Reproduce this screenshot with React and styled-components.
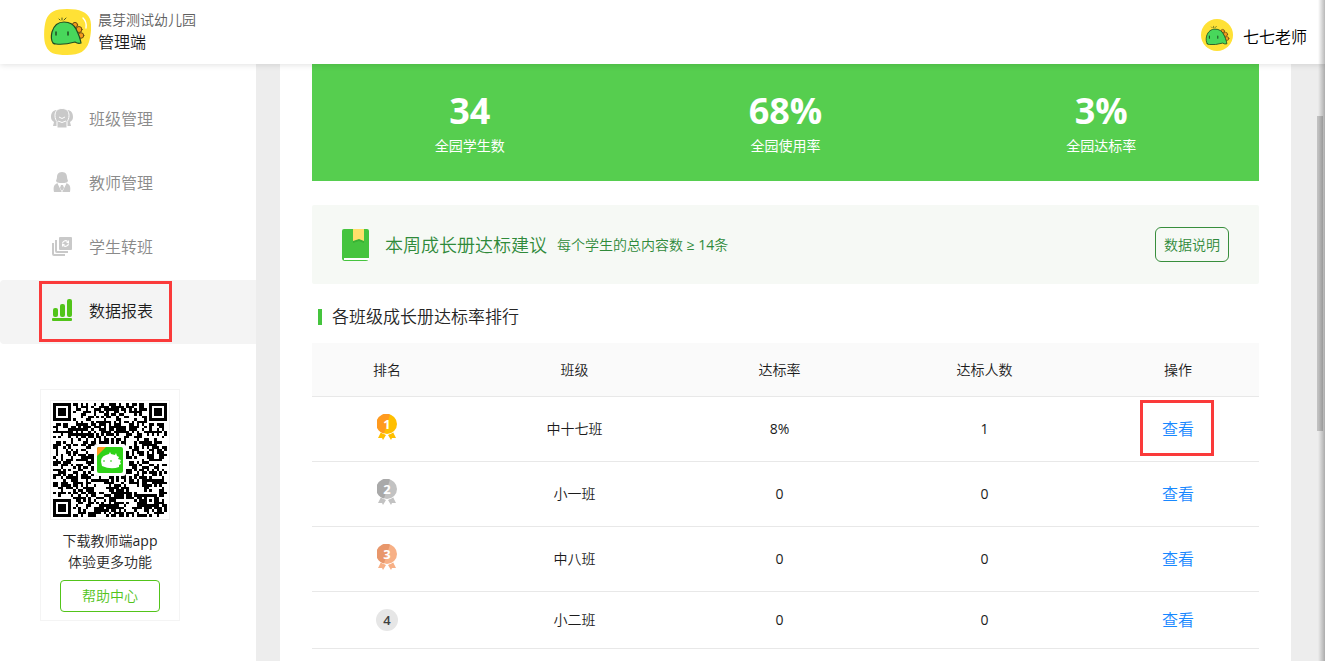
import React from 'react';
import styled, { createGlobalStyle } from 'styled-components';

const GlobalStyle = createGlobalStyle`
  * {
    box-sizing: border-box;
  }
  body {
    margin: 0;
    background: #ededed;
    color: #262626;
    font-family: "Open Sans", "Noto Sans CJK SC", sans-serif;
    font-size: 14px;
    font-weight: 350;
  }
  button {
    font-family: inherit;
    font-weight: inherit;
    cursor: pointer;
  }
`;

const Page = styled.div`
  position: relative;
  display: flex;
  flex-direction: column;
  height: 100vh;
  overflow: hidden;
`;
const Header = styled.header`
  position: relative;
  z-index: 2;
  display: flex;
  flex-shrink: 0;
  justify-content: space-between;
  align-items: center;
  height: 64px;
  padding: 0 18px 0 44px;
  background: #fff;
  box-shadow: 0 1px 6px rgba(0, 0, 0, 0.12);
`;
const Brand = styled.div`
  display: flex;
  align-items: center;
  gap: 7px;
`;
const BrandText = styled.div`
  padding-bottom: 2px;
  line-height: 22px;
  color: #606060;
`;
const BrandTitle = styled.div`
  font-size: 16px;
  color: #1c1c1c;
`;
const User = styled.div`
  display: flex;
  align-items: center;
  gap: 10px;
  padding-top: 6px;
  font-size: 16px;
  line-height: 24px;
  color: #000;
`;
const UserName = styled.span`
  padding-top: 4px;
`;
const Body = styled.div`
  display: flex;
  flex: 1;
  min-height: 0;
`;
const Sidebar = styled.aside`
  flex: 0 0 256px;
  padding-top: 24px;
  background: #fff;
`;
const MenuItem = styled.a`
  position: relative;
  display: flex;
  align-items: center;
  gap: 15px;
  height: 64px;
  padding: 0 0 4px 50px;
  border-radius: 4px 0 0 4px;
  font-size: 16px;
  text-decoration: none;
  color: ${(p) => (p.$active ? '#1c1c1c' : '#8a8a8a')};
  background: ${(p) => (p.$active ? '#f4f4f4' : 'transparent')};
`;
const Mark = styled.span`
  position: absolute;
  inset: ${(p) => p.$inset};
  border: 3px solid #fa3a3a;
  pointer-events: none;
`;
const QrCard = styled.div`
  display: flex;
  flex-direction: column;
  align-items: center;
  width: 140px;
  margin: 45px 0 0 40px;
  padding: 10px 0 8px;
  border: 1px solid #f4f4f4;
  text-align: center;
  line-height: 21px;
`;
const QrFrame = styled.div`
  display: flex;
  margin-bottom: 10px;
  padding: 2px;
  border: 1px solid #f0f0f0;
`;
const HelpButton = styled.button`
  width: 100px;
  height: 32px;
  margin-top: 8px;
  padding: 0 0 2px;
  border: 1px solid #52c41a;
  border-radius: 4px;
  background: #fff;
  font-size: 14px;
  color: #52c41a;
`;
const Latin = styled.span`
  font-weight: 400;
`;
const Main = styled.main`
  flex: 1;
  min-width: 0;
  padding: 0 34px 0 24px;
  overflow: hidden;
`;
const Panel = styled.div`
  min-height: 100%;
  padding: 0 32px;
  background: #fff;
`;
const Stats = styled.div`
  display: grid;
  grid-template-columns: repeat(3, 1fr);
  height: 117px;
  padding-top: 23px;
  background: #56ce4f;
  color: #fff;
  text-align: center;
`;
const StatValue = styled.div`
  font-size: 36px;
  font-weight: 700;
  line-height: 48px;
`;
const StatLabel = styled.div`
  font-weight: 400;
  line-height: 22px;
`;
const Advice = styled.div`
  display: flex;
  align-items: center;
  height: 79px;
  margin-top: 24px;
  padding: 0 30px;
  border-radius: 2px;
  background: #f6f9f5;
  color: #2f8a3a;
`;
const AdviceTitle = styled.span`
  margin: 0 10px 0 16px;
  padding-bottom: 2px;
  font-size: 18px;
`;
const AdviceText = styled.span`
  padding-bottom: 2px;
`;
const NoteButton = styled.button`
  width: 74px;
  height: 35px;
  margin-left: auto;
  padding: 0 0 2px;
  border: 1px solid #388e3c;
  border-radius: 6px;
  background: transparent;
  font-size: 14px;
  color: #2f8a3a;
`;
const SectionTitle = styled.h2`
  display: flex;
  align-items: center;
  gap: 10px;
  margin: 21px 0 14px 6px;
  font-size: 17px;
  font-weight: 350;
  line-height: 24px;
  &::before {
    content: '';
    width: 4px;
    height: 16px;
    background: #45c43e;
  }
`;
const Table = styled.table`
  width: 100%;
  table-layout: fixed;
  border-collapse: separate;
  border-spacing: 0;
  text-align: center;
  color: #1c1c1c;
`;
const Th = styled.th`
  width: ${(p) => p.$width};
  height: 54px;
  padding: 0 0 2px;
  border-bottom: 1px solid #e8e8e8;
  background: #fafafa;
  font-weight: 350;
`;
const Td = styled.td`
  position: relative;
  height: ${(p) => (p.$tall ? '65px' : '57px')};
  padding: 0 0 2px;
  border-bottom: 1px solid #e8e8e8;
`;
const ViewLink = styled.a`
  font-size: 16px;
  text-decoration: none;
  color: #1888ff;
`;
const Rank = styled.div`
  display: flex;
  justify-content: center;
  padding: ${(p) => (p.$medal ? '0 0 2px' : '2px 0 0')};
`;
const RankDot = styled.span`
  width: 22px;
  height: 22px;
  border-radius: 50%;
  background: #e6e6e6;
  font-size: 13px;
  font-weight: 600;
  line-height: 22px;
  color: #404040;
`;
const ScrollThumb = styled.div`
  position: absolute;
  top: 116px;
  right: 2px;
  width: 6px;
  height: 315px;
  background: #c1c1c1;
`;
const EdgeShade = styled.div`
  position: absolute;
  z-index: 3;
  top: 0;
  right: 0;
  bottom: 0;
  width: 7px;
  background: linear-gradient(to right, rgba(0, 0, 0, 0), rgba(0, 0, 0, 0.28));
  pointer-events: none;
`;

function Dino() {
  return (
    <g strokeLinejoin="round" strokeLinecap="round">
      <g fill="#f59a1b" stroke="#6b4a12">
        <circle cx="31" cy="16" r="2.6" />
        <circle cx="35" cy="20.5" r="3" />
        <circle cx="37" cy="26.5" r="2.8" />
      </g>
      <path
        d="M9 34C7 31 7 27 8 23C10 16 15 13 20 13C26 13 30 16 32 20C34 24 36 28 37 34Q34 35 31 33Q20 36 12 35Q10 35 9 34z"
        fill="#48d75b"
        stroke="#1f4d22"
        strokeWidth="1.2"
      />
      <path d="M12 23v3M24 23v3" stroke="#1f4d22" strokeWidth="1.5" />
      <path d="M18 11V9M20 11l2-2M16 11l-1-1" stroke="#4c5a1c" />
    </g>
  );
}

function Logo() {
  return (
    <svg width="47" height="46" viewBox="0 0 47 46" fill="none">
      <path d="M23 0C36 0 43 3 46 10c2 6 1 16-1 23-3 9-9 13-22 13S5 44 2 37C-1 31 0 17 2 11 5 3 11 0 23 0z" fill="#ffe136" />
      <path d="M39 9q4 4 3 10" stroke="#fff" strokeWidth="1.4" strokeLinecap="round" />
      <Dino />
    </svg>
  );
}

function Avatar() {
  return (
    <svg width="32" height="32" viewBox="0 0 32 32" fill="none">
      <circle cx="16" cy="16" r="16" fill="#ffe136" />
      <g transform="translate(0 1) scale(.7)">
        <Dino />
      </g>
    </svg>
  );
}

const icons = {
  classes: (
    <g fill="#c9c9c9">
      <path d="M6 4C2 5 1 8 1 11c0 2 1 4 3 5l-1 4h5V5zM18 4c4 1 5 4 5 7 0 2-1 4-3 5l1 4h-5V5z" />
      <path d="M12 2.5c5 0 7 3 7 7 0 3-1 5-2 6v6.500H7V15.500c-1-1-2-3-2-6 0-4 2-7 7-7z" stroke="#fff" />
      <path d="M9 11q3 3 6 0M8 15q4 3 8 0" fill="none" stroke="#fff" />
    </g>
  ),
  teachers: (
    <g fill="#c9c9c9">
      <path d="M12 2c4 0 5 3 5 5s1 3 1 4c-1 2-3 2-6 2s-5 0-6-2c0-1 1-2 1-4s1-5 5-5z" />
      <path d="M4 22c-1-5 0-8 4-9l4 8 4-8c4 1 5 4 4 9z" />
      <path d="M8 13l4 8 4-8" fill="none" stroke="#fff" strokeWidth="1.3" />
      <path d="M11 15h2l1 3-2 3-2-3z" />
    </g>
  ),
  transfer: (
    <g fill="#c9c9c9">
      <path d="M2 9h2v11h11v2H4q-2 0-2-2zM5 6h2v11h11v2H7q-2 0-2-2z" />
      <rect x="9" y="3" width="13" height="13" rx="1" />
      <path d="M12.500 9.500a3 3 0 0 1 5-2M18.500 9.500a3 3 0 0 1-5 2" fill="none" stroke="#fff" strokeWidth="1.200" />
      <path d="M16 9h3V6zM15 10h-3v3z" fill="#fff" />
    </g>
  ),
  report: (
    <g fill="#52c41a">
      <rect x="3" y="10" width="5" height="9" rx="2" />
      <rect x="10" y="6" width="5" height="13" rx="2" />
      <rect x="17" y="1" width="5" height="18" rx="2" />
      <rect x="2" y="20" width="20" height="3" rx="1" />
    </g>
  ),
};

const menu = [
  { key: 'classes', label: '班级管理' },
  { key: 'teachers', label: '教师管理' },
  { key: 'transfer', label: '学生转班' },
  { key: 'report', label: '数据报表', active: true },
];

// 45 x 45 modules, finder squares in three corners
const QR_SIZE = 45;
const ring = (x, y, cx, cy) => Math.max(Math.abs(x - cx), Math.abs(y - cy));
const qrPath = () => {
  let seed = 20;
  let d = '';
  for (let y = 0; y < QR_SIZE; y++) {
    for (let x = 0; x < QR_SIZE; x++) {
      seed = (seed * 1103515245 + 12345) % 2147483648;
      const corner = Math.min(ring(x, y, 3, 3), ring(x, y, 41, 3), ring(x, y, 3, 41));
      const align = ring(x, y, 38, 38);
      let on = seed / 2147483648 < 0.52;
      if (corner <= 4) on = corner !== 4 && corner !== 2;
      else if (align <= 2) on = align !== 1;
      if (on) d += `M${x} ${y}h1v1h-1z`;
    }
  }
  return d;
};

function QrCode() {
  return (
    <svg width="114" height="114" viewBox="0 0 114 114">
      <path d={qrPath()} transform="scale(2.533)" shapeRendering="crispEdges" />
      <rect x="41" y="41" width="32" height="32" rx="3" fill="#fff" />
      <rect x="44" y="44" width="26" height="26" rx="2" fill="#2fd218" />
      <path d="M44 46q0-2 2-2h7l-9 9z" fill="#ff9a1f" />
      <path d="M49 63q-3-9 4-11l3-1 1-2 1 2 4 1 1-2 1 3 2 1-1 2 3 1-1 2 1 2-2 1v2q-8 3-17-1z" fill="#fff" />
      <path d="M51 57v2M58 57v2" stroke="#2fd218" />
    </svg>
  );
}

function Book() {
  return (
    <svg width="27" height="32" viewBox="0 0 27 32">
      <path d="M2 0h23q2 0 2 2v27H0V2q0-2 2-2z" fill="#45c43e" />
      <path d="M0 29h27v1q-1 2-3 2H3q-3 0-3-3z" fill="#45c43e" />
      <path d="M2 29h25v2H2z" fill="#fff" />
      <path d="M11 12l6-2 5 2v2l-5-2-6 2z" fill="#39b034" />
      <path d="M11 0h11v12l-5-2-6 2z" fill="#ffdf6b" />
    </svg>
  );
}

const medals = {
  1: ['#ff9a1f', '#ffbf00'],
  2: ['#a9a9a9', '#c2c2c2'],
  3: ['#e8976b', '#f7b086'],
};

function Medal({ rank }) {
  const [dark, light] = medals[rank];
  return (
    <svg width="20" height="26" viewBox="0 0 20 26">
      <path d="M4 18l5 3-3 5-1-2-4 0z" fill={light} />
      <path d="M16 18l-5 3 3 5 1-2 4 0z" fill={light} />
      <circle cx="10" cy="10" r="10.5" fill="#fff" />
      <circle cx="10" cy="10" r="10" fill={light} />
      <path d="M13 0.5A10 10 0 1 0 7 19.5z" fill={dark} />
      <text x="10" y="15" textAnchor="middle" fontSize="13" fontWeight="700" fill="#fff">
        {rank}
      </text>
    </svg>
  );
}

const stats = [
  { value: '34', label: '全园学生数' },
  { value: '68%', label: '全园使用率' },
  { value: '3%', label: '全园达标率' },
];

const columns = [
  { title: '排名', width: '150px' },
  { title: '班级', width: '225px' },
  { title: '达标率', width: '185px' },
  { title: '达标人数', width: '225px' },
  { title: '操作', width: 'auto' },
];

const rows = [
  { rank: 1, name: '中十七班', rate: '8%', count: 1 },
  { rank: 2, name: '小一班', rate: '0', count: 0 },
  { rank: 3, name: '中八班', rate: '0', count: 0 },
  { rank: 4, name: '小二班', rate: '0', count: 0 },
];

function App() {
  return (
    <Page>
      <GlobalStyle />
      <Header>
        <Brand>
          <Logo />
          <BrandText>
            晨芽测试幼儿园
            <BrandTitle>管理端</BrandTitle>
          </BrandText>
        </Brand>
        <User>
          <Avatar />
          <UserName>七七老师</UserName>
        </User>
      </Header>
      <Body>
        <Sidebar>
          <nav>
            {menu.map((item) => (
              <MenuItem key={item.key} href="#" $active={item.active}>
                <svg width="24" height="24" viewBox="0 0 24 24">{icons[item.key]}</svg>
                {item.label}
                {item.active && <Mark $inset="1px 84px 2px 39px" />}
              </MenuItem>
            ))}
          </nav>
          <QrCard>
            <QrFrame>
              <QrCode />
            </QrFrame>
            <div>下载教师端<Latin>app</Latin></div>
            <div>体验更多功能</div>
            <HelpButton>帮助中心</HelpButton>
          </QrCard>
        </Sidebar>
        <Main>
          <Panel>
            <Stats>
              {stats.map((s) => (
                <div key={s.label}>
                  <StatValue>{s.value}</StatValue>
                  <StatLabel>{s.label}</StatLabel>
                </div>
              ))}
            </Stats>
            <Advice>
              <Book />
              <AdviceTitle>本周成长册达标建议</AdviceTitle>
              <AdviceText>
                每个学生的总内容数<Latin> ≥ 14</Latin>条
              </AdviceText>
              <NoteButton>数据说明</NoteButton>
            </Advice>
            <SectionTitle>各班级成长册达标率排行</SectionTitle>
            <Table>
              <thead>
                <tr>
                  {columns.map((c) => (
                    <Th key={c.title} $width={c.width}>{c.title}</Th>
                  ))}
                </tr>
              </thead>
              <tbody>
                {rows.map((r) => (
                  <tr key={r.rank}>
                    <Td $tall={r.rank < 4}>
                      <Rank $medal={r.rank < 4}>
                        {r.rank < 4 ? <Medal rank={r.rank} /> : <RankDot>{r.rank}</RankDot>}
                      </Rank>
                    </Td>
                    <Td>{r.name}</Td>
                    <Td><Latin>{r.rate}</Latin></Td>
                    <Td><Latin>{r.count}</Latin></Td>
                    <Td>
                      <ViewLink href="#">查看</ViewLink>
                      {r.rank === 1 && <Mark $inset="3px 45px 5px 43px" />}
                    </Td>
                  </tr>
                ))}
              </tbody>
            </Table>
          </Panel>
        </Main>
      </Body>
      <ScrollThumb />
      <EdgeShade />
    </Page>
  );
}

export default App;
